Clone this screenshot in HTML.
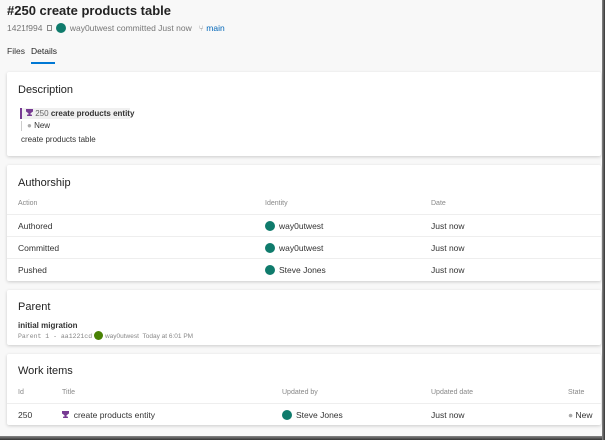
<!DOCTYPE html>
<html><head><style>
*{margin:0;padding:0;box-sizing:border-box}
body{width:605px;height:440px;background:#f8f8f8;font-family:"Liberation Sans",sans-serif;color:#333;position:relative;overflow:hidden;font-size:8.5px}
.a{position:absolute;white-space:nowrap;line-height:11px}
.card{position:absolute;left:7px;width:594px;background:#fff;box-shadow:0 1px 3px rgba(0,0,0,.18);border-radius:2px}
.h{font-size:11px;color:#222}
.g{color:#888;font-size:7px}
.line{position:absolute;left:0;right:0;height:1px;background:#eee}
.av{display:inline-block;width:10px;height:10px;border-radius:50%;background:#0f7b6c;vertical-align:-2px;margin-right:4px}
.tr{display:inline-block;width:7px;height:7px;background:#773b93;clip-path:polygon(0 0,100% 0,100% 35%,65% 60%,65% 80%,85% 80%,85% 100%,15% 100%,15% 80%,35% 80%,35% 60%,0 35%)}
</style></head><body>
<div class="a" style="left:7px;top:3px;font-size:13px;line-height:16px;font-weight:bold;color:#222">#250 create products table</div>
<div class="a" style="left:7px;top:23px;color:#777;font-size:8.5px">1421f994 <span style="display:inline-block;width:5px;height:6px;border:1px solid #888;margin:0 4px 0 2px"></span><span class="av"></span>way0utwest committed Just now &nbsp; <span style="color:#999">⑂</span> <span style="color:#0066b8">main</span></div>
<div class="a" style="left:7px;top:46px;font-size:8.5px;color:#333">Files</div>
<div class="a" style="left:31px;top:46px;font-size:8.5px;color:#222">Details</div>
<div class="a" style="left:31px;top:62px;width:24px;height:2px;background:#0078d4"></div>

<div class="card" style="top:72px;height:84px">
<div class="a h" style="left:11px;top:13px">Description</div>
<div class="a" style="left:13px;top:36px;height:11px;width:110px;background:#f0f0f0;border-left:2px solid #773b93;padding-left:4px;line-height:11px;font-size:8px"><span class="tr"></span> <span style="color:#666">250</span> <b>create products entity</b></div>
<div class="a" style="left:14px;top:49px;border-left:1px solid #ccc;padding-left:5px;font-size:8px;line-height:10px"><span style="color:#aaa">●</span> New</div>
<div class="a" style="left:14px;top:62px;font-size:8px">create products table</div>
</div>

<div class="card" style="top:165px;height:116px">
<div class="a h" style="left:11px;top:13px">Authorship</div>
<div class="a g" style="left:11px;top:33px">Action</div><div class="a g" style="left:258px;top:33px">Identity</div><div class="a g" style="left:424px;top:33px">Date</div>
<div class="line" style="top:49px"></div>
<div class="a" style="left:11px;top:56px">Authored</div><div class="a" style="left:258px;top:56px"><span class="av"></span>way0utwest</div><div class="a" style="left:424px;top:56px">Just now</div>
<div class="line" style="top:71px"></div>
<div class="a" style="left:11px;top:78px">Committed</div><div class="a" style="left:258px;top:78px"><span class="av"></span>way0utwest</div><div class="a" style="left:424px;top:78px">Just now</div>
<div class="line" style="top:93px"></div>
<div class="a" style="left:11px;top:100px">Pushed</div><div class="a" style="left:258px;top:100px"><span class="av"></span>Steve Jones</div><div class="a" style="left:424px;top:100px">Just now</div>
</div>

<div class="card" style="top:290px;height:55px">
<div class="a h" style="left:11px;top:12px">Parent</div>
<div class="a" style="left:11px;top:30px;font-weight:bold;font-size:8px">initial migration</div>
<div class="a" style="left:11px;top:41px;font-size:6.5px;color:#888"><span style="font-family:'Liberation Mono',monospace">Parent 1 - aa1221cd</span> <span class="av" style="background:#498205;width:9px;height:9px;margin-right:2px"></span>way0utwest &nbsp;Today at 6:01 PM</div>
</div>

<div class="card" style="top:354px;height:71px">
<div class="a h" style="left:11px;top:12px">Work items</div>
<div class="a g" style="left:11px;top:33px">Id</div><div class="a g" style="left:55px;top:33px">Title</div><div class="a g" style="left:275px;top:33px">Updated by</div><div class="a g" style="left:424px;top:33px">Updated date</div><div class="a g" style="left:561px;top:33px">State</div>
<div class="line" style="top:49px"></div>
<div class="a" style="left:11px;top:56px">250</div><div class="a" style="left:55px;top:56px"><span class="tr"></span>&nbsp; create products entity</div><div class="a" style="left:275px;top:56px"><span class="av"></span>Steve Jones</div><div class="a" style="left:424px;top:56px">Just now</div><div class="a" style="left:561px;top:56px"><span style="color:#aaa">●</span> New</div>
</div>
<div class="a" style="left:0;top:436px;width:605px;height:4px;background:linear-gradient(#888,#333)"></div>
<div class="a" style="left:602px;top:0;width:3px;height:440px;background:linear-gradient(90deg,#888,#333)"></div>
</body></html>
